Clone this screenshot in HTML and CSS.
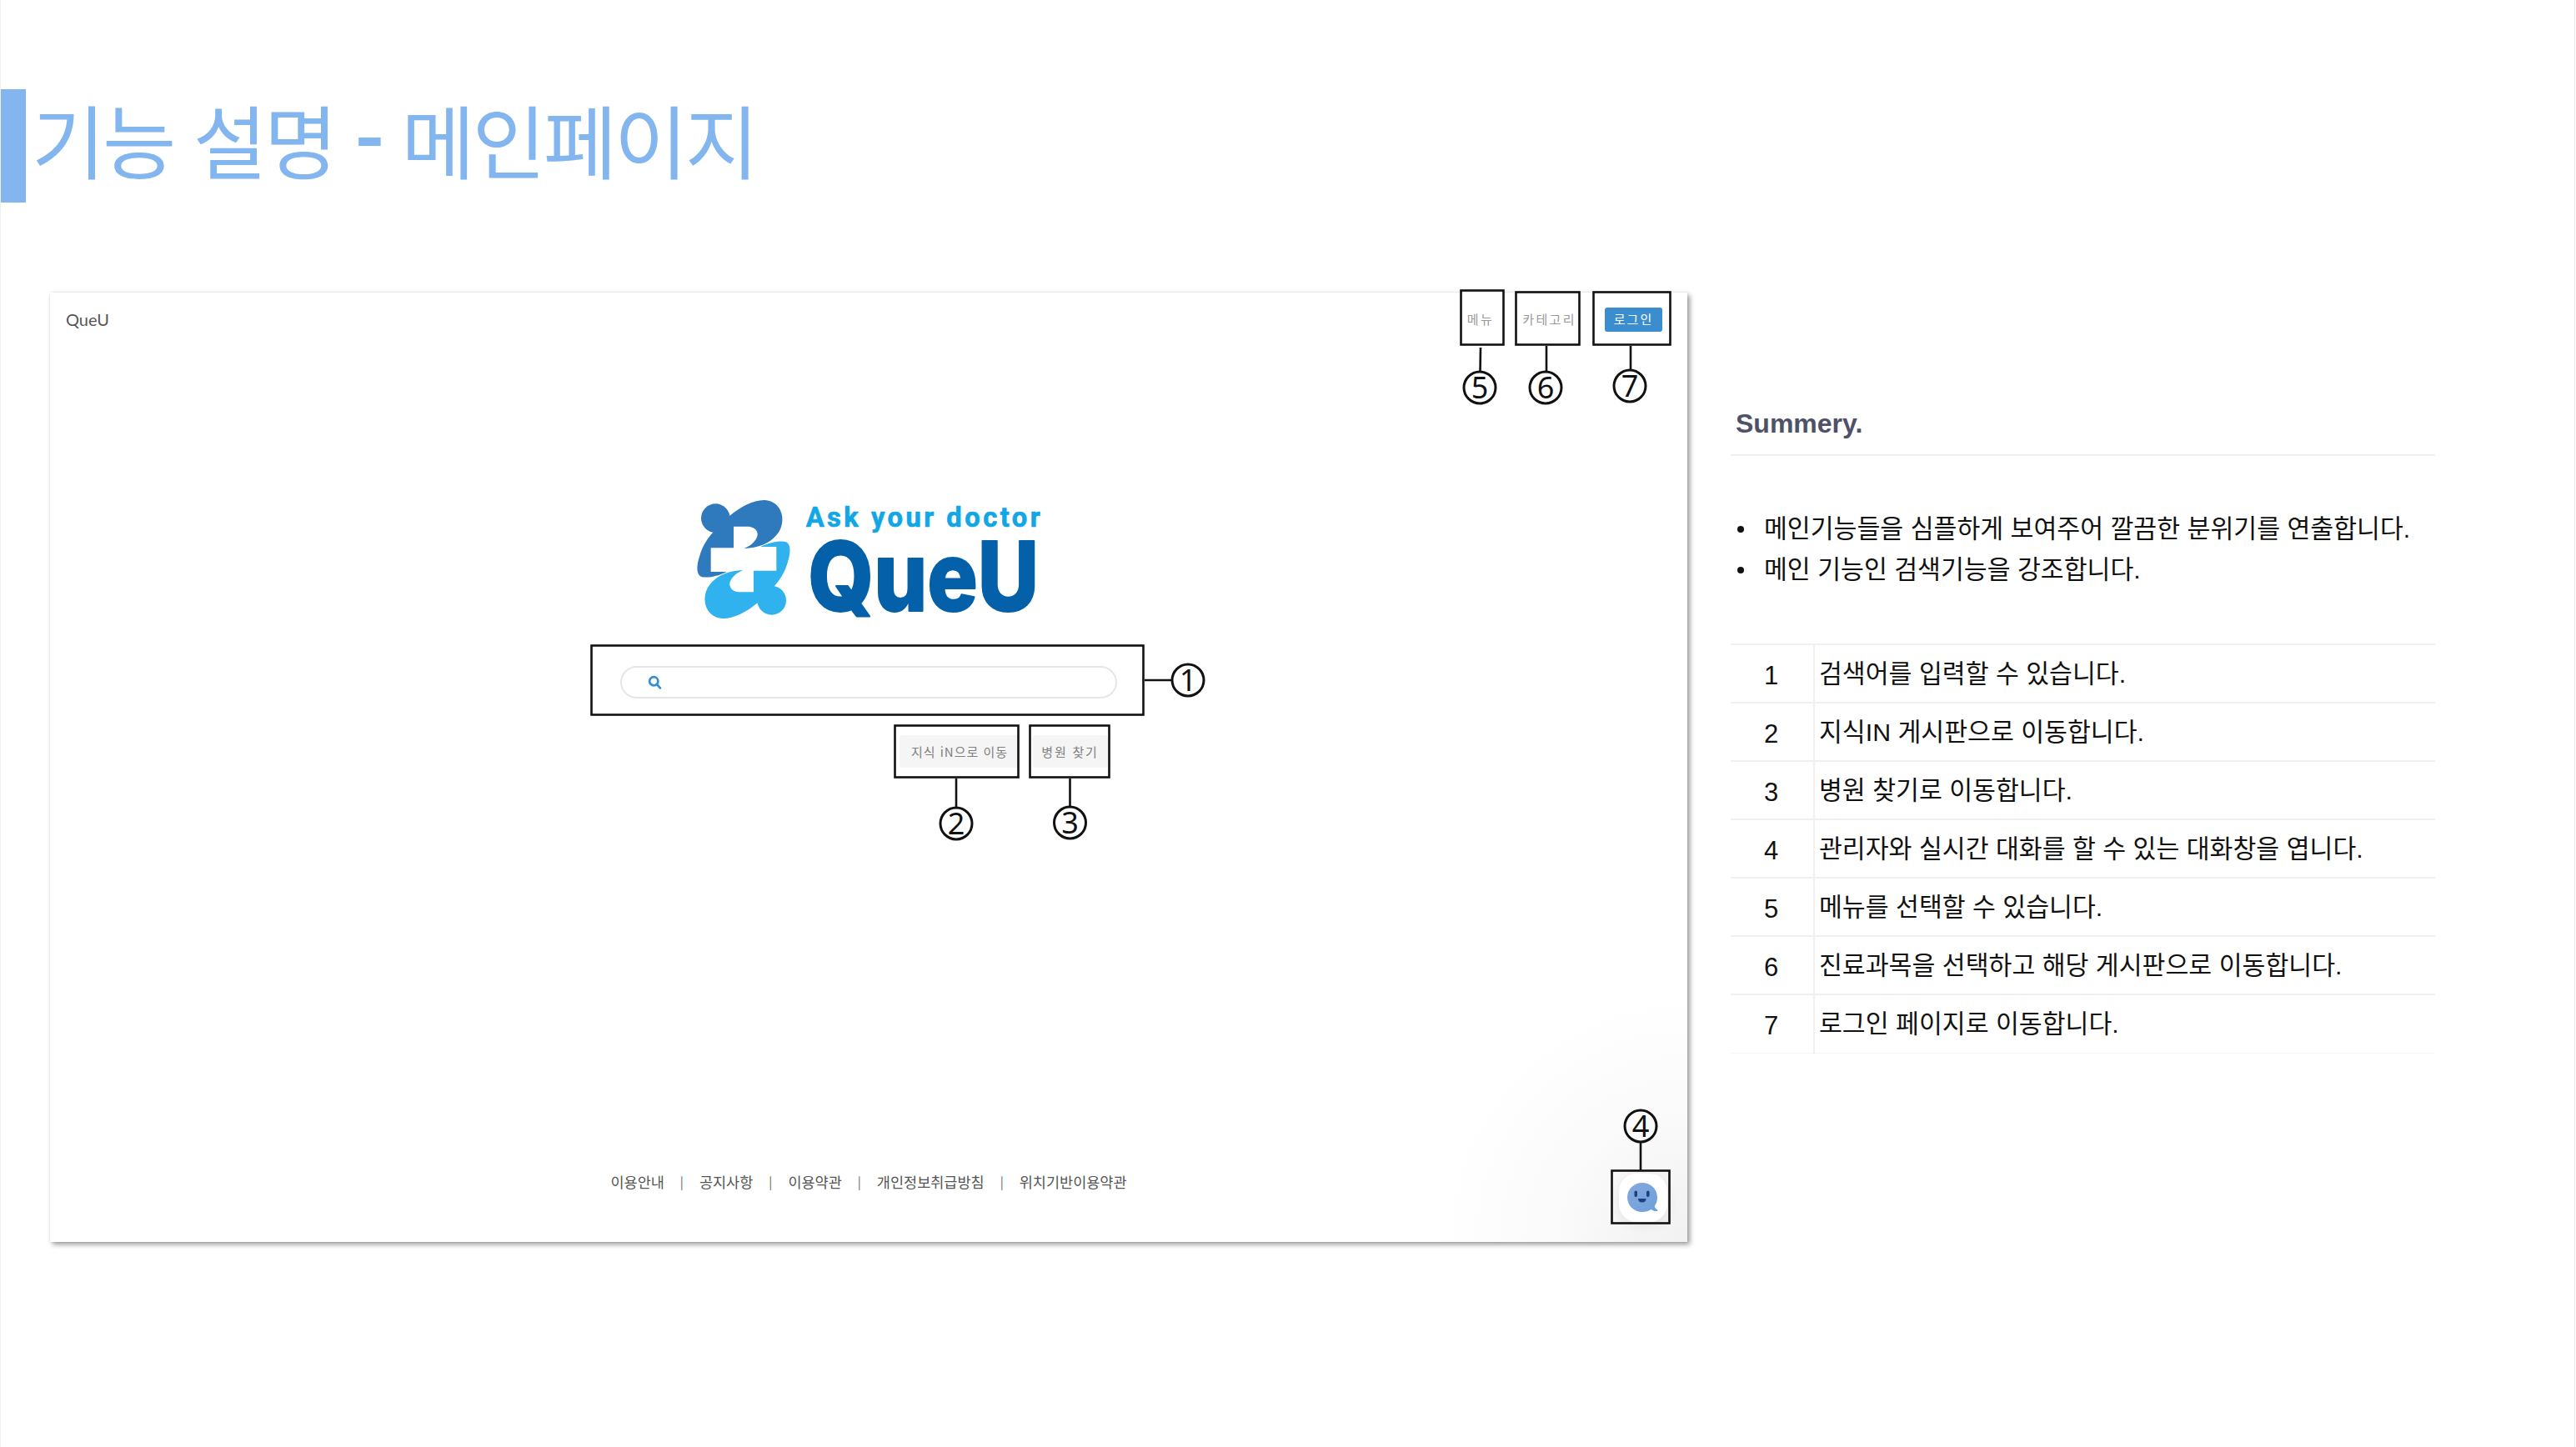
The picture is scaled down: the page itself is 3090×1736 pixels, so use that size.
FILE: index.html
```html
<!DOCTYPE html>
<html lang="ko">
<head>
<meta charset="utf-8">
<title>기능 설명 - 메인페이지</title>
<link rel="stylesheet" href="styles.css">
</head>
<body>
<div class="page">
  <header class="title-row">
    <div class="title-bar"></div>
    <h1 class="title">기능 설명 <b class="title-dash">-</b> 메인페이지</h1>
  </header>
  <main class="content">
    <section class="card">
      <div class="card-head">
        <span class="brand">QueU</span>
        <nav class="nav">
          <span class="nav-item nav-menu">메뉴</span>
          <span class="nav-item">카테고리</span>
          <span class="login">로그인</span>
        </nav>
      </div>
      <div class="card-body">
        <svg class="logo" viewBox="0 0 1560 600" aria-label="QueU logo">
          <g class="mark-dark">
            <circle cx="232" cy="155" r="52"/>
            <path d="M222 207C205 225 185 255 175 290C165 320 160 355 180 365C200 372 240 365 272 348L215 348L215 262L297 262L297 185L345 185C360 185 380 190 383 210C385 225 370 250 335 264C400 262 445 235 465 195C485 150 465 95 410 90C370 88 320 115 285 145L240 170Z"/>
          </g>
          <g class="mark-light" transform="rotate(180 333 303)">
            <circle cx="232" cy="155" r="52"/>
            <path d="M222 207C205 225 185 255 175 290C165 320 160 355 180 365C200 372 240 365 272 348L215 348L215 262L297 262L297 185L345 185C360 185 380 190 383 210C385 225 370 250 335 264C400 262 445 235 465 195C485 150 465 95 410 90C370 88 320 115 285 145L240 170Z"/>
          </g>
          <text class="logo-ask" x="557" y="185" textLength="843">Ask your doctor</text>
          <text class="logo-name" x="565" y="490" textLength="830" lengthAdjust="spacingAndGlyphs">QueU</text>
        </svg>
        <div class="search">
          <svg class="search-icon" viewBox="0 0 16 16"><circle cx="6.8" cy="6.8" r="4.8"/><path d="M10.2 10.2L14 14.5"/></svg>
        </div>
        <div class="actions">
          <span class="action action-wide">지식 iN으로 이동</span>
          <span class="action">병원 찾기</span>
        </div>
      </div>
      <footer class="card-foot">
        <span>이용안내</span><i>|</i><span>공지사항</span><i>|</i><span>이용약관</span><i>|</i><span>개인정보취급방침</span><i>|</i><span>위치기반이용약관</span>
      </footer>
      <div class="chat">
        <svg class="chat-icon" viewBox="0 0 44 44">
          <defs>
            <linearGradient id="bubble" x1="0" y1="0" x2="1" y2="1">
              <stop offset="0" stop-color="#86a9dd"/>
              <stop offset="1" stop-color="#6d9fdc"/>
            </linearGradient>
          </defs>
          <path class="bubble" d="M21 4C30.900 4 39 11.600 39 21.500C39 25.500 37.800 29 35.600 32C36.200 34.200 37.500 35.700 39.300 36.600C39.800 37.200 39.300 38 38.500 38C35.900 38.200 33.500 37.500 31.800 36C28.800 38 25 39 21 39C11.100 39 3 31.400 3 21.500C3 11.600 11.100 4 21 4Z"/>
          <rect class="face" x="11.500" y="13.500" width="3.500" height="7.500" rx="1.750"/>
          <rect class="face" x="26" y="13.500" width="3.500" height="7.500" rx="1.750"/>
          <path class="face" d="M16 23L25.500 23C25.500 26 23.800 27.500 20.700 27.500C17.700 27.500 16 26 16 23Z"/>
        </svg>
      </div>
    </section>
    <aside class="panel">
      <h2 class="panel-title">Summery.</h2>
      <ul class="points">
        <li>메인기능들을 심플하게 보여주어 깔끔한 분위기를 연출합니다.</li>
        <li>메인 기능인 검색기능을 강조합니다.</li>
      </ul>
      <table class="steps">
        <tr><th>1</th><td>검색어를 입력할 수 있습니다.</td></tr>
        <tr><th>2</th><td>지식IN 게시판으로 이동합니다.</td></tr>
        <tr><th>3</th><td>병원 찾기로 이동합니다.</td></tr>
        <tr><th>4</th><td>관리자와 실시간 대화를 할 수 있는 대화창을 엽니다.</td></tr>
        <tr><th>5</th><td>메뉴를 선택할 수 있습니다.</td></tr>
        <tr><th>6</th><td>진료과목을 선택하고 해당 게시판으로 이동합니다.</td></tr>
        <tr><th>7</th><td>로그인 페이지로 이동합니다.</td></tr>
      </table>
    </aside>
  </main>
  <svg class="notes" viewBox="0 0 3090 1736">
    <rect x="709.500" y="774.500" width="662" height="83"/>
    <rect x="1073.500" y="870.500" width="148" height="62"/>
    <rect x="1235.500" y="870.500" width="95" height="62"/>
    <rect x="1752.500" y="348.500" width="51" height="65"/>
    <rect x="1818.500" y="350.500" width="76" height="63"/>
    <rect x="1911.500" y="350.500" width="92" height="63"/>
    <rect x="1933.500" y="1404.500" width="69" height="63"/>
    <path d="M1373 816H1406M1147 934V968M1283.500 934V967M1968 1371V1404M1776 417L1775.500 447M1855 415V446M1956 415V444"/>
    <circle cx="1425" cy="816" r="19"/><text x="1425" y="829">1</text>
    <circle cx="1147" cy="988" r="19"/><text x="1147" y="1001">2</text>
    <circle cx="1283.500" cy="987" r="19"/><text x="1283.500" y="1000">3</text>
    <circle cx="1968" cy="1351" r="19"/><text x="1968" y="1364">4</text>
    <circle cx="1775" cy="465" r="19"/><text x="1775" y="478">5</text>
    <circle cx="1854" cy="465" r="19"/><text x="1854" y="478">6</text>
    <circle cx="1955" cy="463" r="19"/><text x="1955" y="476">7</text>
  </svg>
</div>
</body>
</html>
```
FILE: styles.css
```css
* { box-sizing: border-box; }
html, body { margin: 0; padding: 0; background: #fff; }
body { font-family: "Noto Sans CJK KR", "Noto Sans", sans-serif; color: #111; }
.page { position: relative; width: 3089px; height: 1736px; overflow: hidden; padding-top: 107px; border-left: 1px solid #f0f0f0; border-right: 1px solid #eaeaea; }

.title-row { display: flex; height: 136px; margin-left: -1px; }
.title-bar { width: 31px; height: 136px; background: #83b6ee; }
.title { margin: -9px 0 0 7px; font-size: 96px; font-weight: 400; line-height: 136px; letter-spacing: -3.250px; color: #83b6ee; white-space: nowrap; }
.title-dash { font-weight: 700; }

.content { display: flex; align-items: flex-start; margin-top: 108px; padding-left: 59px; }

.card { position: relative; display: flex; flex-direction: column; flex: none; width: 1964px; height: 1139px; background: radial-gradient(circle at 100% 100%, #f1f1f1 0, #fbfbfb 170px, #fff 300px); box-shadow: 3px 3px 6px rgba(0,0,0,.4), 0 0 3px rgba(0,0,0,.08); }
.card-head { display: flex; justify-content: space-between; align-items: center; height: 29px; margin-top: 18px; padding: 0 30px 0 19px; }
.brand { padding-bottom: 2px; font-family: "Lato", "Liberation Sans", sans-serif; font-size: 20px; font-weight: 400; color: #555; }
.nav { display: flex; align-items: center; gap: 34px; }
.nav-item { padding-bottom: 3px; font-size: 15px; letter-spacing: 2.400px; color: #999; white-space: nowrap; }
.nav-menu { letter-spacing: 2.400px; }
.login { display: flex; align-items: center; justify-content: center; width: 69px; height: 29px; padding-bottom: 2px; border-radius: 3px; background: #3a8dcf; color: #fff; font-size: 15px; letter-spacing: 2px; }

.card-body { display: flex; flex-direction: column; align-items: center; margin-top: 172px; }
.logo { display: block; width: 520px; height: 200px; margin-left: -3px; }
.mark-dark { fill: #2f79bd; }
.mark-light { fill: #30b2ee; }
.logo-ask { font-family: "Roboto", "Liberation Sans", sans-serif; font-size: 98px; font-weight: 700; fill: #12a7e4; stroke: #12a7e4; stroke-width: 2px; stroke-linejoin: round; }
.logo-name { font-family: "Inter", "Liberation Sans", sans-serif; font-size: 345px; font-weight: 800; fill: #0460a9; stroke: #0460a9; stroke-width: 6px; stroke-linejoin: round; }

.search { display: flex; align-items: center; width: 596px; height: 39px; margin-top: 29px; padding-left: 31px; border: 2px solid #e6e6e6; border-radius: 20px; background: #fff; }
.search-icon { width: 17px; height: 17px; fill: none; stroke: #3a8dcf; stroke-width: 2.600; stroke-linecap: round; }
.actions { display: flex; justify-content: flex-end; gap: 15px; width: 596px; margin-top: 44px; padding-right: 11px; }
.action { display: flex; align-items: center; justify-content: center; width: 91px; height: 39px; border-radius: 4px; background: #f5f5f5; font-size: 15px; letter-spacing: 1.800px; color: #808080; white-space: nowrap; }
.action-wide { width: 144px; letter-spacing: 1px; }

.card-foot { display: flex; justify-content: center; align-items: center; gap: 19px; margin-top: auto; padding-bottom: 60px; font-size: 17.500px; line-height: 24px; color: #555; }
.card-foot i { font-style: normal; color: #666; font-size: 15px; }

.chat { position: absolute; right: 24px; bottom: 24px; display: flex; align-items: center; justify-content: center; width: 58px; height: 58px; border-radius: 21px; background: #fff; box-shadow: 0 3px 14px rgba(0,0,0,.08); }
.chat-icon { width: 44px; height: 44px; }
.bubble { fill: url(#bubble); }
.face { fill: #1f3f7d; }

.panel { flex: none; width: 845px; margin-left: 52px; padding-top: 137px; }
.panel-title { margin: 0; padding: 0 0 17px 6px; font-family: "Liberation Sans", sans-serif; font-size: 32px; font-weight: 700; line-height: 40px; color: #4e5268; border-bottom: 2px solid #f0f0f0; }
.points { list-style: none; margin: 63px 0 0; padding: 0 0 0 40px; font-family: "Liberation Sans", "Noto Sans CJK KR", sans-serif; font-size: 30.300px; line-height: 49px; }
.points li { position: relative; white-space: nowrap; }
.points li::before { content: ""; position: absolute; left: -32px; top: 21px; width: 8px; height: 8px; border-radius: 50%; background: #111; }
.steps { width: 100%; margin-top: 64px; border-collapse: collapse; font-family: "Liberation Sans", "Noto Sans CJK KR", sans-serif; font-size: 30.300px; }
.steps tr { height: 70px; border-top: 2px solid #f0f0f0; }
.steps tr:last-child { border-bottom: 1px solid #f6f6f6; }
.steps th { width: 100px; padding: 5px 2px 0 0; font-weight: 400; font-size: 31px; text-align: center; border-right: 2px solid #f0f0f0; }
.steps td { padding: 0 0 5px 5px; white-space: nowrap; }

.notes { position: absolute; left: -1px; top: 0; width: 3090px; height: 1736px; fill: none; stroke: #111; stroke-width: 2.600px; pointer-events: none; }
.notes circle { stroke-width: 3px; }
.notes text { font-family: "Noto Sans", sans-serif; font-size: 36px; text-anchor: middle; fill: #111; stroke: none; }
```
